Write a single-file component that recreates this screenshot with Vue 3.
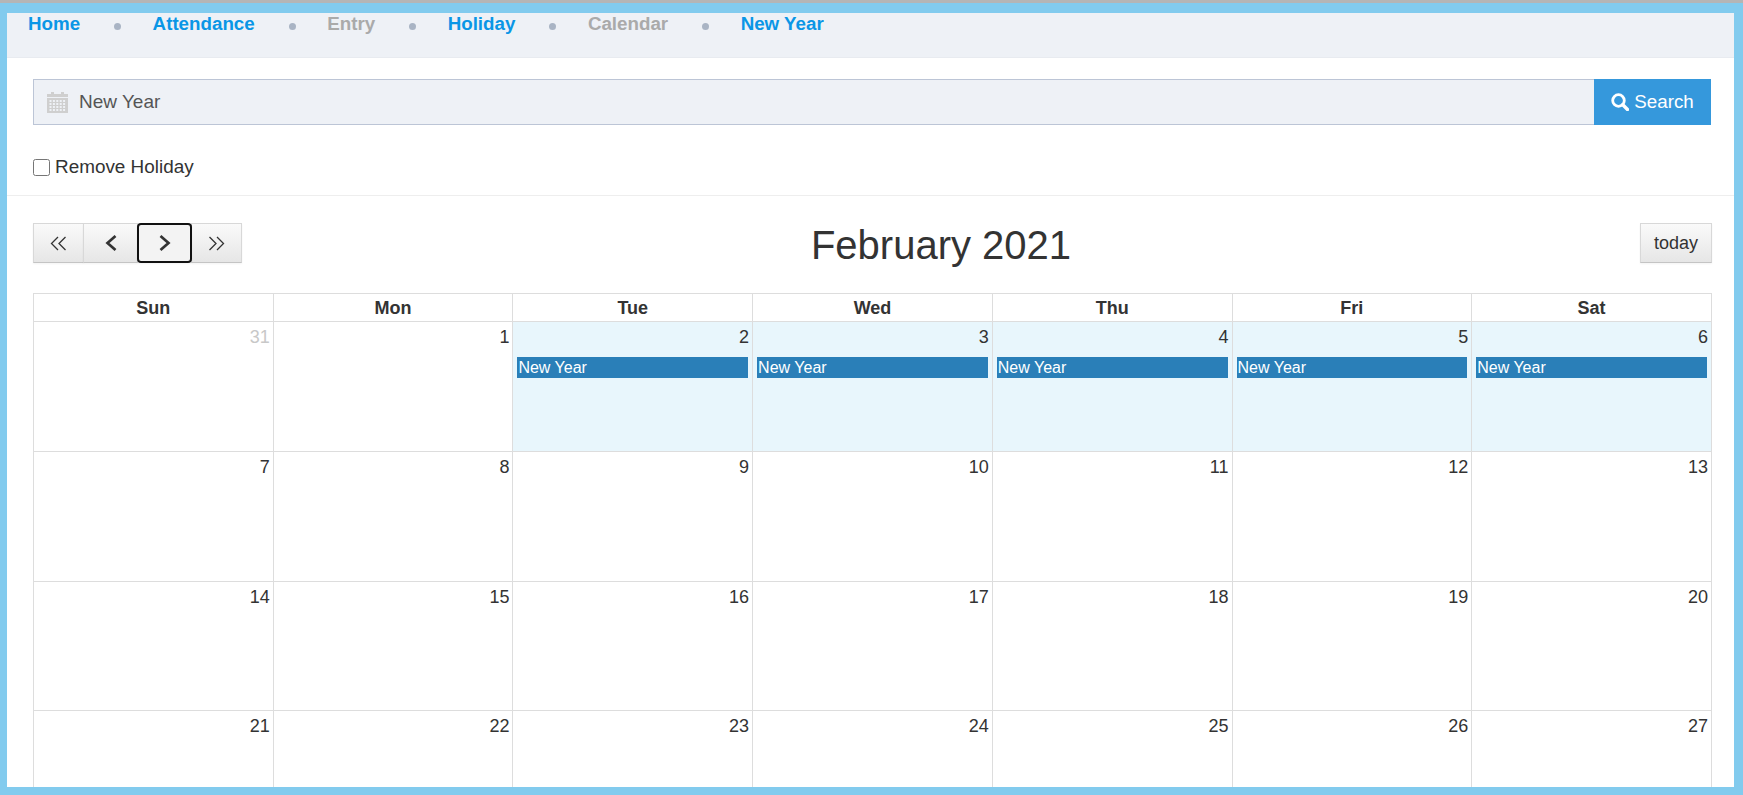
<script setup>
const crumbs = [
  { t: 'Home', on: true }, { t: 'Attendance', on: true }, { t: 'Entry', on: false },
  { t: 'Holiday', on: true }, { t: 'Calendar', on: false }, { t: 'New Year', on: true }
]
const days = ['Sun', 'Mon', 'Tue', 'Wed', 'Thu', 'Fri', 'Sat']
const weeks = [
  [31, 1, 2, 3, 4, 5, 6],
  [7, 8, 9, 10, 11, 12, 13],
  [14, 15, 16, 17, 18, 19, 20],
  [21, 22, 23, 24, 25, 26, 27]
]
const isHoliday = (w, i) => w === 0 && i >= 2
</script>

<template>
  <div class="frame">
    <div class="inner">
      <nav class="crumbs">
        <template v-for="(c, i) in crumbs" :key="c.t">
          <span class="crumb" :class="{ off: !c.on }">{{ c.t }}</span>
          <i v-if="i < crumbs.length - 1" class="dot"></i>
        </template>
      </nav>

      <section class="form">
        <div class="search">
          <div class="field">
            <svg class="cal" width="21" height="22" viewBox="0 0 21 22">
              <path fill="#cfcfcf" d="M0 3h4V1h3v2h7V1h3v2h4v19H0z" />
              <g fill="#eef1f6">
                <rect x="0" y="6" width="21" height="1" />
                <rect v-for="n in 20" :key="n" :x="2.5 + ((n - 1) % 5) * 3.4" :y="9 + Math.floor((n - 1) / 5) * 3" width="2" height="2" />
              </g>
            </svg>
            <span>New Year</span>
          </div>
          <button class="go">
            <svg width="18" height="18" viewBox="0 0 18 18" fill="none" stroke="#fff">
              <circle cx="7.5" cy="7.500" r="5.800" stroke-width="2.800" />
              <path d="M11.800 11.800l4.700 4.700" stroke-width="3.400" stroke-linecap="round" />
            </svg>
            Search
          </button>
        </div>
        <label class="check"><input type="checkbox" />Remove Holiday</label>
      </section>

      <section class="calendar">
        <header class="toolbar">
          <div class="group">
            <button class="btn outer">
              <svg width="17" height="15" viewBox="0 0 17 15" fill="none" stroke="#333" stroke-width="1.300"><path d="M8 1L1.500 7.500 8 14M15.500 1L9 7.500l6.500 6.500" /></svg>
            </button>
            <button class="btn mid">
              <svg width="12" height="16" viewBox="0 0 12 16" fill="none" stroke="#333" stroke-width="2.700"><path d="M10.500 1L2.500 8l8 7" /></svg>
            </button>
            <button class="btn mid focus">
              <svg width="12" height="16" viewBox="0 0 12 16" fill="none" stroke="#333" stroke-width="2.700"><path d="M1.500 1l8 7-8 7" /></svg>
            </button>
            <button class="btn outer">
              <svg width="17" height="15" viewBox="0 0 17 15" fill="none" stroke="#333" stroke-width="1.300"><path d="M1.500 1L8 7.500 1.500 14M9 1l6.500 6.500L9 14" /></svg>
            </button>
          </div>
          <h2>February 2021</h2>
          <button class="btn today">today</button>
        </header>

        <table>
          <thead>
            <tr><th v-for="d in days" :key="d">{{ d }}</th></tr>
          </thead>
          <tbody>
            <tr v-for="(week, w) in weeks" :key="w">
              <td v-for="(n, i) in week" :key="n" :class="{ hol: isHoliday(w, i) }">
                <div class="num" :class="{ other: w === 0 && i === 0 }">{{ n }}</div>
                <div v-if="isHoliday(w, i)" class="event">New Year</div>
              </td>
            </tr>
          </tbody>
        </table>
      </section>
    </div>
  </div>
</template>

<style>
html, body { margin: 0; overflow: hidden; }
</style>

<style scoped>
.frame {
  box-sizing: border-box;
  width: 1743px;
  height: 795px;
  padding: 13px 9px 8px 7px;
  background: linear-gradient(#b5b5b5 0 3px, #82cbee 3px);
  font-family: "Liberation Sans", Arial, sans-serif;
  color: #333;
}
.inner {
  height: 100%;
  overflow: hidden;
  background: #fff;
}
.crumbs {
  box-sizing: border-box;
  height: 45px;
  display: flex;
  align-items: flex-start;
  padding-left: 21px;
  background: #eef1f6;
  border-bottom: 1px solid #e8ebf0;
  font-size: 18.75px;
  font-weight: 700;
  line-height: 22px;
}
.crumb { color: #0a96e6; }
.crumb.off { color: #aaa; }
.dot {
  width: 7px;
  height: 7px;
  margin: 10px 31.5px 0 34px;
  border-radius: 50%;
  background: #a9b4c4;
}
.form {
  height: 138px;
  padding: 21px 23px 0 26px;
  border-bottom: 1px solid #eee;
  box-sizing: border-box;
}
.search { display: flex; height: 46px; }
.field {
  flex: 1;
  display: flex;
  align-items: center;
  gap: 11px;
  padding-left: 13px;
  background: #eef1f6;
  border: 1px solid #bcc5d6;
  border-right: 0;
  font-size: 19px;
  color: #555;
}
.cal { flex: none; }
.go {
  width: 117px;
  display: flex;
  align-items: center;
  justify-content: center;
  gap: 5px;
  border: 0;
  padding: 0;
  background: #3598dc;
  color: #fff;
  font: 18.75px "Liberation Sans", Arial, sans-serif;
}
.check {
  display: flex;
  align-items: center;
  margin-top: 31px;
  font-size: 18.9px;
  line-height: 22px;
}
.check input {
  width: 17px;
  height: 17px;
  margin: 0 5px 0 0;
}
.calendar { padding: 27px 22px 0 26px; }
.toolbar {
  display: flex;
  justify-content: space-between;
  height: 40px;
  margin-bottom: 30px;
}
h2 {
  margin: 0;
  font-size: 40px;
  font-weight: 400;
  line-height: 44px;
}
.group { display: flex; }
.btn {
  box-sizing: border-box;
  height: 40px;
  display: flex;
  align-items: center;
  justify-content: center;
  padding: 0;
  background: linear-gradient(#fafafa, #e6e6e6);
  border: 1px solid #d8d8d8;
  border-bottom-color: #c4c4c4;
  box-shadow: 0 1px 2px rgba(0, 0, 0, .05);
  color: #333;
  font: 18px "Liberation Sans", Arial, sans-serif;
}
.group .btn { margin-right: -1px; }
.group .btn:last-child { margin-right: 0; }
.outer { width: 51px; }
.mid { width: 55px; }
.btn.focus {
  position: relative;
  z-index: 1;
  background: #f3f3f3;
  border: 2px solid #111;
  border-radius: 4px;
}
.today { width: 72px; }
table {
  width: 1679px;
  border-collapse: collapse;
  table-layout: fixed;
}
th, td { border: 1px solid #ddd; padding: 0; }
th {
  height: 27px;
  font-size: 18px;
  line-height: 22px;
  font-weight: 700;
}
td {
  height: 129px;
  vertical-align: top;
}
tr:nth-child(3) td { height: 128px; }
td.hol { background: #e8f6fc; }
.num {
  padding: 5px 3px 0 0;
  text-align: right;
  font-size: 18px;
  line-height: 20px;
}
.num.other { color: #c8c8c8; }
.event {
  height: 21px;
  margin: 10px 4px 0;
  padding-left: 1px;
  background: #2a7fb8;
  color: #fff;
  font-size: 16px;
  line-height: 21px;
}
</style>
